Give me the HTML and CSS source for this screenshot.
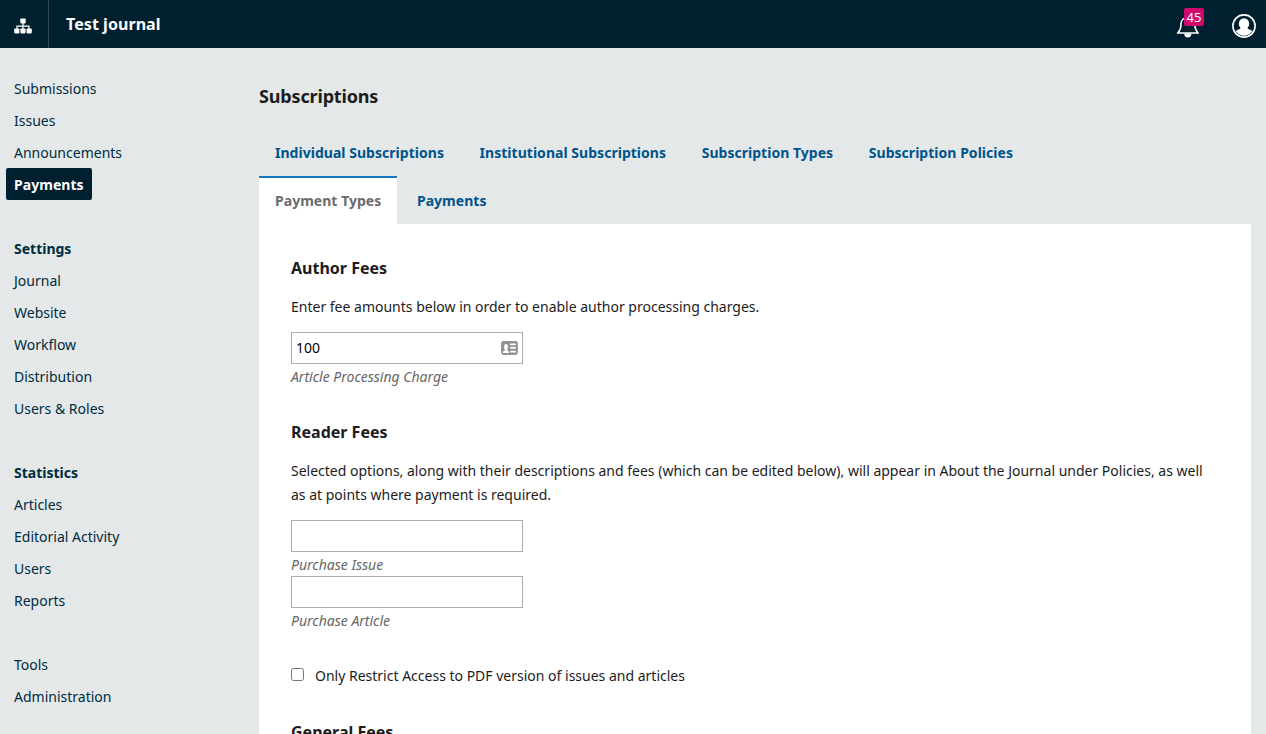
FILE: index.html
```
<!DOCTYPE html>
<html lang="en">
<head>
<meta charset="utf-8">
<title>Subscriptions</title>
<link rel="stylesheet" href="styles.css">
</head>
<body>
<header class="header">
  <a class="contexts" href="#" aria-label="Journals">
    <svg width="18" height="16" viewBox="0 0 18 16" fill="#fff">
      <rect x="6.3" y="0.4" width="5.4" height="5" rx=".8"/>
      <path d="M9 5v6M3 11V8.1h12V11" fill="none" stroke="#fff" stroke-width="1.2"/>
      <rect x="0.2" y="10.4" width="5.2" height="5" rx=".8"/>
      <rect x="6.4" y="10.4" width="5.2" height="5" rx=".8"/>
      <rect x="12.6" y="10.4" width="5.2" height="5" rx=".8"/>
    </svg>
  </a>
  <a class="journal" href="#">Test journal</a>
  <div class="actions">
    <a class="tasks" href="#" aria-label="Tasks">
      <svg width="24" height="26" viewBox="0 0 24 26" fill="none" stroke="#fff">
        <path d="M1.600 19C4.300 16.400 5 14.500 5 10C5 6 8 3.500 12 3.500S18.800 6 18.800 10C18.800 14.500 19.700 16.400 22.200 19Z" stroke-width="1.6" stroke-linejoin="round"/>
        <path d="M8.200 19.600h7.200a3.600 4 0 0 1-7.200 0Z" fill="#fff" stroke="none"/>
      </svg>
      <span class="badge">45</span>
    </a>
    <a class="user" href="#" aria-label="User">
      <svg width="24" height="24" viewBox="0 0 24 24">
        <circle cx="12" cy="12" r="11.1" fill="none" stroke="#fff" stroke-width="1.6"/>
        <ellipse cx="12" cy="9.700" rx="5.200" ry="5.500" fill="#fff"/>
        <path d="M8.600 13.500h6.800c.4 2.100 3 1.900 4.900 3.600A9.700 9.700 0 0 1 12 21.800a9.700 9.700 0 0 1-8.300-4.700c1.900-1.700 4.500-1.500 4.900-3.600Z" fill="#fff"/>
      </svg>
    </a>
  </div>
</header>
<div class="layout">
  <nav class="nav">
    <ul>
      <li><a href="#">Submissions</a></li>
      <li><a href="#">Issues</a></li>
      <li><a href="#">Announcements</a></li>
      <li><a class="current" href="#">Payments</a></li>
    </ul>
    <ul>
      <li class="heading">Settings</li>
      <li><a href="#">Journal</a></li>
      <li><a href="#">Website</a></li>
      <li><a href="#">Workflow</a></li>
      <li><a href="#">Distribution</a></li>
      <li><a href="#">Users &amp; Roles</a></li>
    </ul>
    <ul>
      <li class="heading">Statistics</li>
      <li><a href="#">Articles</a></li>
      <li><a href="#">Editorial Activity</a></li>
      <li><a href="#">Users</a></li>
      <li><a href="#">Reports</a></li>
    </ul>
    <ul>
      <li><a href="#">Tools</a></li>
      <li><a href="#">Administration</a></li>
    </ul>
  </nav>
  <main class="main">
    <h1>Subscriptions</h1>
    <div class="tabs">
      <a href="#">Individual Subscriptions</a>
      <a href="#">Institutional Subscriptions</a>
      <a href="#">Subscription Types</a>
      <a href="#">Subscription Policies</a>
      <a class="active" href="#">Payment Types</a>
      <a href="#">Payments</a>
    </div>
    <form class="panel">
      <section>
        <h2>Author Fees</h2>
        <p>Enter fee amounts below in order to enable author processing charges.</p>
        <div class="field">
          <div class="control">
            <input id="apc" type="text" value="100">
            <svg class="autofill" width="17" height="14" viewBox="0 0 17 14">
              <rect x=".9" y=".9" width="15.2" height="12.2" rx="1.5" fill="#929292" stroke="#929292" stroke-width="1.6"/>
              <path d="M2 12v-1.500l1.700-1V8.300c-.4-.5-.6-1.200-.6-2.300 0-1.800.6-2.900 1.900-2.900s1.900 1.100 1.900 2.900c0 1.100-.2 1.800-.6 2.300v1.200l1.700 1V12Z" fill="#fff"/>
              <path d="M9.200 2.500h5.600v1.700H9.200ZM9.200 6.100h5.600v1.700H9.200ZM9.200 9.700h5.600v1.700H9.200Z" fill="#fff"/>
            </svg>
          </div>
          <label for="apc">Article Processing Charge</label>
        </div>
      </section>
      <section>
        <h2>Reader Fees</h2>
        <p>Selected options, along with their descriptions and fees (which can be edited below), will appear in About the Journal under Policies, as well as at points where payment is required.</p>
        <div class="field">
          <div class="control"><input id="issue" type="text"></div>
          <label for="issue">Purchase Issue</label>
        </div>
        <div class="field">
          <div class="control"><input id="article" type="text"></div>
          <label for="article">Purchase Article</label>
        </div>
        <label class="check"><input type="checkbox"><span>Only Restrict Access to PDF version of issues and articles</span></label>
      </section>
      <section>
        <h2>General Fees</h2>
      </section>
    </form>
  </main>
</div>
</body>
</html>
```
FILE: styles.css
```
* { box-sizing: border-box; }
html, body { height: 100%; }
body {
  margin: 0;
  display: flex;
  flex-direction: column;
  overflow: hidden;
  background: #e4e8e9;
  color: #1c1c1c;
  font: 14px/24px "Noto Sans", sans-serif;
}
a { text-decoration: none; color: inherit; }
h1, h2, p, ul { margin: 0; padding: 0; }
ul { list-style: none; }

.header {
  flex: 0 0 48px;
  display: flex;
  align-items: stretch;
  background: #002030;
  color: #fff;
}
.contexts {
  width: 49px;
  padding: 18px 0 0 14px;
  border-right: 1px solid #33474f;
}
.contexts svg, .tasks svg, .user svg { display: block; }
.journal {
  padding-left: 17px;
  font-size: 16px;
  line-height: 48px;
  letter-spacing: 0.06px;
  font-weight: 700;
}
.actions { margin-left: auto; display: flex; padding-right: 10px; }
.tasks { position: relative; padding-top: 14px; width: 56px; }
.badge {
  position: absolute;
  left: 8px;
  top: 8px;
  width: 20px;
  height: 18px;
  border-radius: 2px;
  background: #d00a6c;
  font-size: 13px;
  line-height: 18px;
  text-align: center;
}
.user { padding-top: 14px; }

.layout { flex: 1; min-height: 0; display: flex; }
.nav {
  flex: 0 0 259px;
  padding: 24px 0 0 6px;
  display: flex;
  flex-direction: column;
  gap: 32px;
  color: #002c40;
}
.nav li { height: 32px; line-height: 33px; }
.nav a { display: inline-block; height: 32px; padding: 0 8px; border-radius: 2px; }
.nav .heading { padding-left: 8px; font-weight: 700; }
.nav .current { background: #002030; color: #fff; font-weight: 700; letter-spacing: 0.05px; }

.main { flex: 1; min-width: 0; padding: 32px 15px 0 0; }
h1 { font-size: 18px; line-height: 32px; font-weight: 700; letter-spacing: -0.16px; }
.tabs {
  display: flex;
  flex-wrap: wrap;
  column-gap: 3.6px;
  width: 830px;
  margin-top: 16px;
}
.tabs a {
  padding: 0 16px;
  border-top: 2px solid transparent;
  line-height: 45px;
  height: 48px;
  font-weight: 700;
  letter-spacing: 0.03px;
  color: #00548b;
}
.tabs .active { background: #fff; border-top-color: #1378bd; color: #6b6b6b; }
.panel { background: #fff; padding: 32px; height: 700px; }
h2 { font-size: 16px; line-height: 24px; font-weight: 700; }
.panel p { margin: 14px 0; padding-top: 1px; margin-bottom: 13px; }
section + section { margin-top: 32px; }
.control { position: relative; width: 232px; height: 32px; }
.control input {
  display: block;
  width: 100%;
  height: 100%;
  padding: 0 4px 1px;
  border: 1px solid #adadad;
  border-radius: 0;
  background: #fff;
  color: #000;
  font: inherit;
}
.autofill { position: absolute; right: 5px; top: 9px; }
.field label { display: block; font-style: italic; line-height: 25px; height: 24px; color: #666; }
.check { display: flex; margin-top: 32px; }
.check input {
  appearance: none;
  width: 13px;
  height: 13px;
  margin: 4px 11px 0 0;
  border: 1px solid #767676;
  border-radius: 2.5px;
  background: #fff;
}
```
